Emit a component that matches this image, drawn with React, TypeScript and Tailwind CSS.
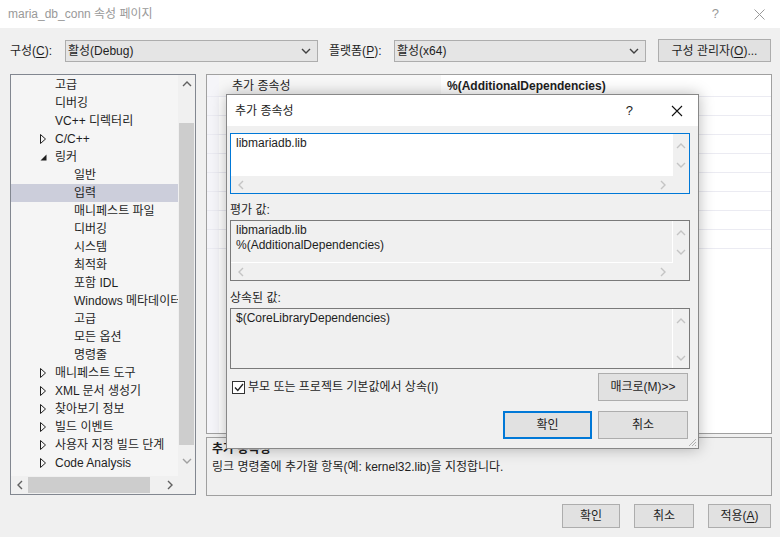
import React from 'react'

const font = "font-['Liberation_Sans','Noto_Sans_CJK_KR',sans-serif]"

type TreeItem = { label: string; level: 1 | 2; arrow?: 'open' | 'closed'; selected?: boolean }

// the list is scrolled, so the first rows are children of a node out of view
const treeItems: TreeItem[] = [
  { label: '고급', level: 1 },
  { label: '디버깅', level: 1 },
  { label: 'VC++ 디렉터리', level: 1 },
  { label: 'C/C++', level: 1, arrow: 'closed' },
  { label: '링커', level: 1, arrow: 'open' },
  { label: '일반', level: 2 },
  { label: '입력', level: 2, selected: true },
  { label: '매니페스트 파일', level: 2 },
  { label: '디버깅', level: 2 },
  { label: '시스템', level: 2 },
  { label: '최적화', level: 2 },
  { label: '포함 IDL', level: 2 },
  { label: 'Windows 메타데이터', level: 2 },
  { label: '고급', level: 2 },
  { label: '모든 옵션', level: 2 },
  { label: '명령줄', level: 2 },
  { label: '매니페스트 도구', level: 1, arrow: 'closed' },
  { label: 'XML 문서 생성기', level: 1, arrow: 'closed' },
  { label: '찾아보기 정보', level: 1, arrow: 'closed' },
  { label: '빌드 이벤트', level: 1, arrow: 'closed' },
  { label: '사용자 지정 빌드 단계', level: 1, arrow: 'closed' },
  { label: 'Code Analysis', level: 1, arrow: 'closed' },
]

function Chevron({ dir, color = '#a6a6a6' }: { dir: 'up' | 'down' | 'left' | 'right'; color?: string }) {
  const d = {
    up: 'M1 6 L5 2 L9 6',
    down: 'M1 2 L5 6 L9 2',
    left: 'M6 1 L2 5 L6 9',
    right: 'M2 1 L6 5 L2 9',
  }[dir]
  const vertical = dir === 'up' || dir === 'down'
  return (
    <svg width={vertical ? 10 : 8} height={vertical ? 8 : 10} viewBox={vertical ? '0 0 10 8' : '0 0 8 10'}>
      <path d={d} fill="none" stroke={color} strokeWidth="1.4" />
    </svg>
  )
}

function TreeArrow({ kind }: { kind: 'open' | 'closed' }) {
  if (kind === 'open') {
    return (
      <svg width="7" height="7" viewBox="0 0 7 7">
        <path d="M6.5 0.5 L6.5 6.5 L0.5 6.5 Z" fill="#1e1e1e" />
      </svg>
    )
  }
  return (
    <svg width="6" height="10" viewBox="0 0 6 10">
      <path d="M0.5 0.5 L5.5 5 L0.5 9.5 Z" fill="none" stroke="#1e1e1e" strokeWidth="1" />
    </svg>
  )
}

function Ul({ children }: { children: React.ReactNode }) {
  return <span className="underline underline-offset-2">{children}</span>
}

function Combo({ value, width }: { value: string; width: string }) {
  return (
    <div className={`${width} flex h-[22px] items-center justify-between border border-[#adadad] bg-[#e5e5e5] pl-[2px] pr-[6px]`}>
      <span>{value}</span>
      <Chevron dir="down" color="#404040" />
    </div>
  )
}

function Button({ children, className = '', primary = false }: { children: React.ReactNode; className?: string; primary?: boolean }) {
  return (
    <div
      className={`flex items-center justify-center bg-[#e1e1e1] ${
        primary ? 'border-2 border-[#0078d7]' : 'border border-[#adadad]'
      } ${className}`}
    >
      {children}
    </div>
  )
}

function Tree() {
  return (
    <div className="flex h-[421px] w-[186px] flex-col border border-[#828790] bg-[#f5f5f5]">
      <div className="flex min-h-0 flex-1">
        <div className="flex-1 overflow-hidden pt-[1px]">
          {treeItems.map((it, i) => (
            <div
              key={i}
              className={`flex h-[18px] items-center whitespace-nowrap ${it.selected ? 'bg-[#cccedb]' : ''} ${
                it.level === 2 ? 'pl-[63px]' : it.arrow ? 'pl-[29px]' : 'pl-[44px]'
              }`}
            >
              {it.arrow && (
                <span className="flex w-[15px] items-center">
                  <TreeArrow kind={it.arrow} />
                </span>
              )}
              <span>{it.label}</span>
            </div>
          ))}
        </div>
        <div className="flex w-[17px] flex-col bg-[#f0f0f0]">
          <div className="flex h-[17px] items-center justify-center">
            <Chevron dir="up" color="#606060" />
          </div>
          <div className="mx-[1px] mt-[31px] h-[322px] bg-[#cdcdcd]" />
          <div className="flex flex-1 items-center justify-center">
            <Chevron dir="down" color="#a0a0a0" />
          </div>
        </div>
      </div>
      <div className="flex h-[18px] bg-[#f0f0f0]">
        <div className="flex w-[17px] items-center justify-center">
          <Chevron dir="left" color="#606060" />
        </div>
        <div className="my-[1px] w-[122px] bg-[#cdcdcd]" />
        <div className="flex-1" />
        <div className="flex w-[17px] items-center justify-center">
          <Chevron dir="right" color="#606060" />
        </div>
        <div className="w-[17px]" />
      </div>
    </div>
  )
}

function PropertyGrid() {
  return (
    <div className="flex h-[360px] flex-col border border-[#a0a0a0] bg-white">
      <div className="flex h-[22px] border-b border-[#ebebf2]">
        <div className="w-[12px] bg-[#f5f5f9]" />
        <div className="flex w-[222px] items-center bg-[#f7f7f7] pl-[13px]">추가 종속성</div>
        <div className="flex flex-1 items-center pl-[6px] font-bold">%(AdditionalDependencies)</div>
      </div>
      {Array.from({ length: 8 }).map((_, i) => (
        <div key={i} className="flex h-[19px] border-b border-[#ebebf2]">
          <div className="w-[12px] bg-[#f5f5f9]" />
          <div className="w-[222px]" />
        </div>
      ))}
      <div className="flex flex-1">
        <div className="w-[12px] bg-[#f5f5f9]" />
      </div>
    </div>
  )
}

function ValueBox({
  lines,
  height,
  active = false,
  hscroll = true,
}: {
  lines: string[]
  height: string
  active?: boolean
  hscroll?: boolean
}) {
  return (
    <div
      className={`flex ${height} w-[460px] border ${active ? 'border-[#0078d7]' : 'border-[#7a7a7a]'} bg-[#f0f0f0]`}
    >
      <div className="flex flex-1 flex-col">
        <div
          className={`flex-1 pl-[5px] pt-[2px] leading-[15px] ${
            active ? 'bg-white' : 'border-b border-r border-white'
          } ${hscroll ? '' : 'border-b-0'}`}
        >
          {lines.map((l) => (
            <div key={l}>{l}</div>
          ))}
        </div>
        {hscroll && (
          <div className="flex h-[17px] items-center justify-between px-[6px]">
            <Chevron dir="left" color="#c4c4c4" />
            <Chevron dir="right" color="#c4c4c4" />
          </div>
        )}
      </div>
      <div className={`flex w-[16px] flex-col items-center justify-between pt-[8px] ${hscroll ? 'pb-[24px]' : 'pb-[6px]'}`}>
        <Chevron dir="up" color="#c4c4c4" />
        <Chevron dir="down" color="#c4c4c4" />
      </div>
    </div>
  )
}

function Dialog() {
  return (
    <div className="absolute left-[226px] top-[94px] flex h-[355px] w-[473px] flex-col border border-[#888888] bg-[#f0f0f0] shadow-[0_0_14px_rgba(0,0,0,0.28)]">
      <div className="flex h-[31px] items-center bg-white pl-[8px] pr-[15px]">
        <span className="flex-1">추가 종속성</span>
        <span className="mr-[38px] text-[13px]">?</span>
        <svg width="12" height="12" viewBox="0 0 12 12">
          <path d="M1 1 L11 11 M11 1 L1 11" stroke="#111" strokeWidth="1.1" />
        </svg>
      </div>
      <div className="flex flex-col pl-[3px]">
        <div className="mt-[7px]">
          <ValueBox lines={['libmariadb.lib']} height="h-[61px]" active />
        </div>
        <div className="mt-[7px] h-[19px] leading-[19px]">평가 값:</div>
        <ValueBox lines={['libmariadb.lib', '%(AdditionalDependencies)']} height="h-[61px]" />
        <div className="mt-[7px] h-[20px] leading-[20px]">상속된 값:</div>
        <ValueBox lines={['$(CoreLibraryDependencies)']} height="h-[61px]" hscroll={false} />
        <div className="mt-[4px] flex h-[28px] items-center pr-[10px]">
          <div className="ml-[2px] flex h-[13px] w-[13px] items-center justify-center border border-[#333] bg-white">
            <svg width="10" height="9" viewBox="0 0 10 9">
              <path d="M1 4.5 L3.8 7.5 L9 1" fill="none" stroke="#222" strokeWidth="1.3" />
            </svg>
          </div>
          <span className="ml-[3px] flex-1">부모 또는 프로젝트 기본값에서 상속(I)</span>
          <Button className="h-[28px] w-[90px]">매크로(M)&gt;&gt;</Button>
        </div>
        <div className="mt-[10px] flex justify-end gap-[6px] pr-[10px]">
          <Button primary className="h-[28px] w-[89px]">
            확인
          </Button>
          <Button className="h-[28px] w-[90px]">취소</Button>
        </div>
      </div>
      <div className="absolute bottom-[1px] right-[1px]">
        <svg width="10" height="10" viewBox="0 0 10 10">
          <path d="M9 2 L2 9 M9 5 L5 9 M9 8 L8 9" stroke="#b0b0b0" strokeWidth="1" />
        </svg>
      </div>
    </div>
  )
}

export default function App() {
  return (
    <div className={`relative h-[537px] w-[780px] overflow-hidden bg-[#f0f0f0] text-[12px] text-[#1e1e1e] ${font}`}>
      {/* window title bar */}
      <div className="flex h-[28px] items-center bg-white pl-[8px] pr-[15px] text-[#999999]">
        <span className="flex-1">maria_db_conn 속성 페이지</span>
        <span className="mr-[35px] text-[13px]">?</span>
        <svg width="11" height="11" viewBox="0 0 11 11">
          <path d="M0.5 0.5 L10.5 10.5 M10.5 0.5 L0.5 10.5" stroke="#999" strokeWidth="1" />
        </svg>
      </div>

      {/* configuration row */}
      <div className="mt-[11px] flex h-[23px] items-center pl-[10px]">
        <span className="w-[55px]">
          구성(<Ul>C</Ul>):
        </span>
        <Combo value="활성(Debug)" width="w-[253px]" />
        <span className="ml-[11px] w-[65px]">
          플랫폼(<Ul>P</Ul>):
        </span>
        <Combo value="활성(x64)" width="w-[252px]" />
        <Button className="ml-[12px] h-[23px] w-[113px]">
          구성 관리자(<Ul>O</Ul>)...
        </Button>
      </div>

      {/* main content */}
      <div className="mt-[12px] flex gap-[10px] pl-[10px]">
        <Tree />
        <div className="flex w-[566px] flex-col gap-[3px]">
          <PropertyGrid />
          <div className="h-[59px] border border-[#a0a0a0] px-[5px] pt-[2px] leading-[18px]">
            <div className="font-bold">추가 종속성</div>
            <div>링크 명령줄에 추가할 항목(예: kernel32.lib)을 지정합니다.</div>
          </div>
        </div>
      </div>

      {/* bottom buttons */}
      <div className="mt-[8px] flex justify-end gap-[14px] pr-[9px]">
        <Button className="h-[24px] w-[58px]">확인</Button>
        <Button className="h-[24px] w-[60px]">취소</Button>
        <Button className="h-[24px] w-[63px]">
          적용(<Ul>A</Ul>)
        </Button>
      </div>

      <Dialog />
    </div>
  )
}
